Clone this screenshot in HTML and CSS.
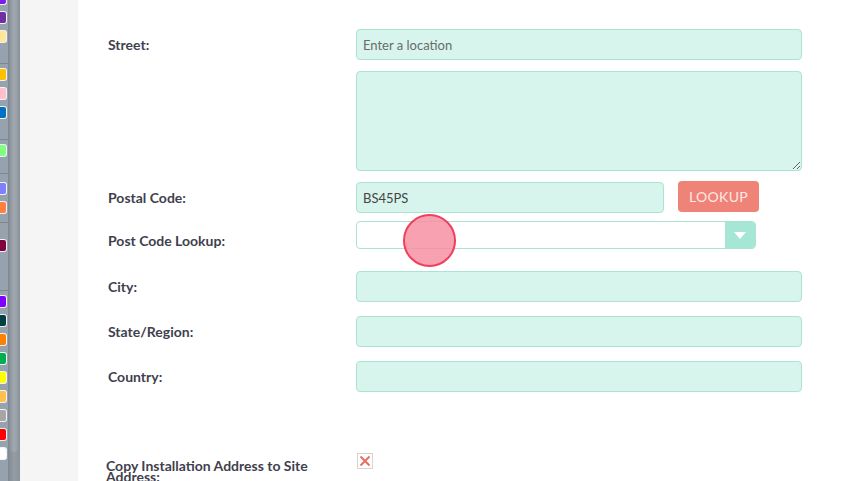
FILE: index.html
```html
<!DOCTYPE html>
<html>
<head>
<meta charset="utf-8">
<link rel="stylesheet" href="styles.css">
</head>
<body>
<div class="page">
  <aside class="side">
    <div class="swatches">
      <span class="sw top" style="background:#7b1ce8"></span>
      <span class="sw" style="background:#7030a0"></span>
      <span class="sw" style="background:#ffe699"></span>
      <span class="sep s1"></span>
      <span class="sw" style="background:#ffc000"></span>
      <span class="sw" style="background:#ffc0cb"></span>
      <span class="sw" style="background:#0070c0"></span>
      <span class="sep s2"></span>
      <span class="sw" style="background:#80ff80"></span>
      <span class="sep s3"></span>
      <span class="sw" style="background:#8080ff"></span>
      <span class="sw" style="background:#ff8040"></span>
      <span class="sep s4"></span>
      <span class="sw" style="background:#800040"></span>
      <span class="sep s5"></span>
      <span class="sw" style="background:#8000ff"></span>
      <span class="sw" style="background:#004040"></span>
      <span class="sw" style="background:#ff8000"></span>
      <span class="sw" style="background:#00b050"></span>
      <span class="sw" style="background:#ffff00"></span>
      <span class="sw" style="background:#ffc04f"></span>
      <span class="sw" style="background:#a6a6a6"></span>
      <span class="sw" style="background:#ff0000"></span>
      <span class="sw" style="background:#ffffff"></span>
    </div>
    <div class="track"><div class="thumb"></div></div>
    <div class="panel"></div>
  </aside>
  <main class="main">
    <div class="row r-street">
      <label class="lbl">Street:</label>
      <div class="field"><input class="inp" type="text" placeholder="Enter a location"></div>
    </div>
    <div class="row r-area">
      <span class="lbl"></span>
      <div class="field"><textarea class="area"></textarea></div>
    </div>
    <div class="row r-postal">
      <label class="lbl">Postal Code:</label>
      <div class="field postal">
        <input class="inp short" type="text" value="BS45PS">
        <button class="btn">LOOKUP</button>
      </div>
    </div>
    <div class="row r-lookup">
      <label class="lbl">Post Code Lookup:</label>
      <div class="field">
        <div class="select">
          <span class="sel-text"></span>
          <span class="sel-arrow"><svg width="12" height="7" viewBox="0 0 12 7"><path d="M0 0H12L6 7Z" fill="#fff"/></svg></span>
        </div>
        <span class="cursor"></span>
      </div>
    </div>
    <div class="row r-city">
      <label class="lbl">City:</label>
      <div class="field"><input class="inp" type="text"></div>
    </div>
    <div class="row r-state">
      <label class="lbl">State/Region:</label>
      <div class="field"><input class="inp" type="text"></div>
    </div>
    <div class="row r-country">
      <label class="lbl">Country:</label>
      <div class="field"><input class="inp" type="text"></div>
    </div>
    <div class="row r-copy">
      <label class="lbl copy">Copy Installation Address to Site Address:</label>
      <div class="field">
        <span class="check"><svg width="12" height="12" viewBox="0 0 12 12"><path d="M1.5 1.5L10.5 10.5M10.5 1.5L1.5 10.5" stroke="#ea6d62" stroke-width="2" fill="none"/></svg></span>
      </div>
    </div>
  </main>
</div>
</body>
</html>
```

FILE: styles.css
```css
html, body {
  margin: 0;
  padding: 0;
  height: 100%;
  overflow: hidden;
  background: #fff;
}
.page {
  display: flex;
  height: 481px;
  font-family: Lato, "Open Sans", sans-serif;
}
.side {
  display: flex;
  width: 78px;
  flex: none;
}
.swatches {
  width: 8px;
  background: #96a2ae;
  display: flex;
  flex-direction: column;
}
.sw {
  display: block;
  width: 7px;
  height: 13px;
  margin-top: 6px;
  box-sizing: border-box;
  border: 1px solid #f2f2f6;
  border-left: none;
  border-radius: 0 3px 3px 0;
}
.sw.top {
  height: 6px;
  margin-top: -1px;
  border-top: none;
}
.sep {
  display: block;
  height: 1px;
  background: #7d8894;
}
.s1 { margin-top: 20px; margin-bottom: -2px; }
.s2 { margin-top: 20px; margin-bottom: -2px; }
.s3 { margin-top: 16px; margin-bottom: 2px; }
.s4 { margin-top: 8px; margin-bottom: 10px; }
.s5 { margin-top: 38px; margin-bottom: -2px; }
.track {
  width: 12px;
  background: linear-gradient(to right, #7f8891, #959ca4 50%, #8a929a);
}
.thumb {
  height: 452px;
  margin: 0 2px;
  background: linear-gradient(to right, #8e969e, #a1a8af 50%, #959ca4);
  border-radius: 0 0 4px 4px;
}
.panel {
  width: 58px;
  background: #f5f5f5;
}
.main {
  flex: 1;
  padding-left: 30px;
  padding-top: 29px;
}
.row {
  display: flex;
  align-items: flex-start;
}
.lbl {
  width: 248px;
  flex: none;
  font-weight: 700;
  font-size: 14px;
  color: #3f3f4e;
  line-height: 31px;
}
.field {
  flex: none;
  position: relative;
}
.inp {
  display: block;
  box-sizing: border-box;
  width: 446px;
  height: 31px;
  margin: 0;
  padding: 0 6px;
  background: #d8f5ed;
  border: 1px solid #ade3d4;
  border-radius: 4px;
  font-family: Lato, sans-serif;
  font-size: 13px;
  color: #444;
  outline: none;
}
.inp::placeholder { color: #6a6a6a; }
.area {
  display: block;
  box-sizing: border-box;
  width: 446px;
  height: 100px;
  margin: 0;
  background: #d8f5ed;
  border: 1px solid #ade3d4;
  border-radius: 4px;
  outline: none;
}
.r-area { margin-top: 11px; }
.r-postal { margin-top: 11px; }
.postal {
  display: flex;
  align-items: flex-start;
  gap: 14px;
}
.inp.short { width: 308px; }
.btn {
  margin-top: -1px;
  width: 81px;
  height: 31px;
  border: none;
  border-radius: 4px;
  background: #f08377;
  color: #fde9e6;
  font-family: Lato, sans-serif;
  font-size: 14px;
  letter-spacing: 0.3px;
  padding: 0;
}
.r-lookup { margin-top: 8px; }
.r-lookup .lbl { padding-top: 4px; }
.select {
  display: flex;
  box-sizing: border-box;
  width: 400px;
  height: 28px;
  border: 1px solid #ade3d4;
  border-radius: 4px;
  background: #fff;
  overflow: hidden;
}
.sel-text { flex: 1; }
.sel-arrow {
  width: 30px;
  background: #a6e6d4;
  display: flex;
  align-items: center;
  justify-content: center;
}
.cursor {
  position: absolute;
  left: 47px;
  top: -7px;
  width: 53px;
  height: 53px;
  box-sizing: border-box;
  border-radius: 50%;
  background: rgba(246, 138, 156, 0.8);
  border: 2px solid #ef3f5d;
}
.r-city { margin-top: 15px; }
.r-state { margin-top: 14px; }
.r-country { margin-top: 14px; }
.r-copy { margin-top: 61px; }
.lbl.copy {
  width: 222px;
  margin-left: -2px;
  margin-right: 28px;
  line-height: 11px;
  padding-top: 7px;
}
.check {
  display: flex;
  align-items: center;
  justify-content: center;
  box-sizing: border-box;
  width: 16px;
  height: 16px;
  margin-left: 1px;
  border: 1px solid #d3d3d3;
  background: #fff;
}
```
